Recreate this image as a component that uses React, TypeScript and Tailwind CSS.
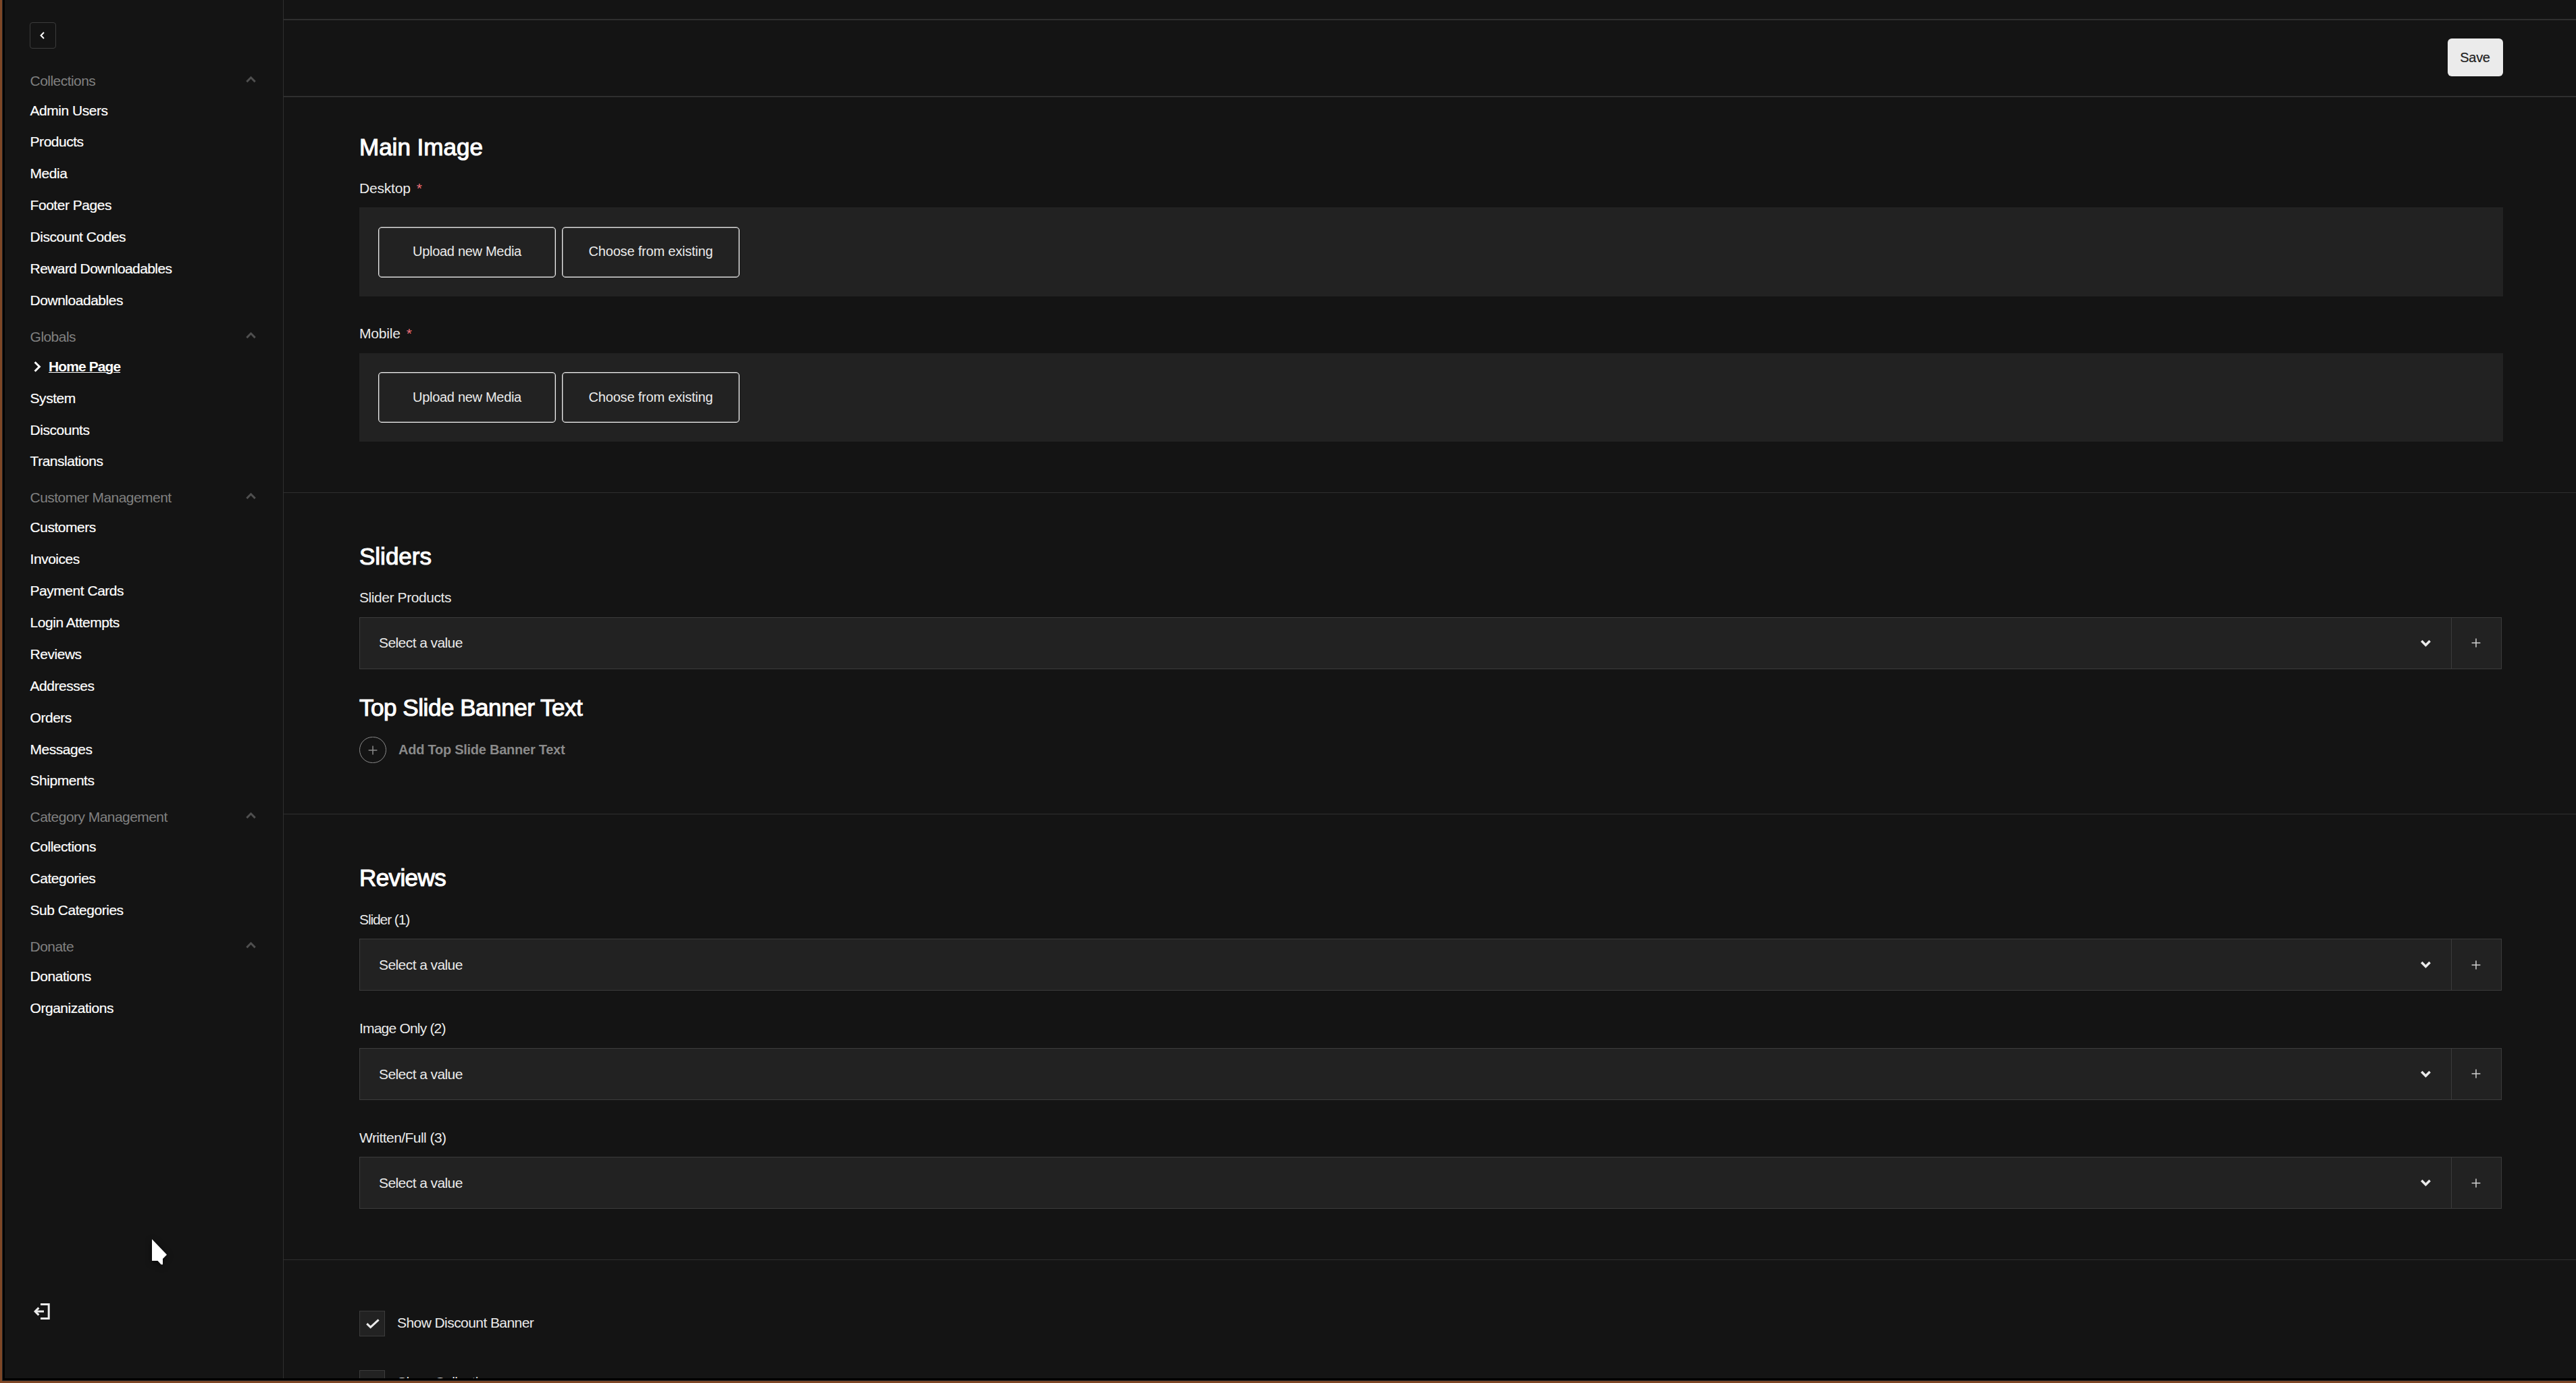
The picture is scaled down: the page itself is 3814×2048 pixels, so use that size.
import { useState } from "react";
import clsx from "clsx";

const navGroups = [
  {
    label: "Collections",
    items: ["Admin Users", "Products", "Media", "Footer Pages", "Discount Codes", "Reward Downloadables", "Downloadables"],
  },
  { label: "Globals", items: ["Home Page", "System", "Discounts", "Translations"] },
  {
    label: "Customer Management",
    items: ["Customers", "Invoices", "Payment Cards", "Login Attempts", "Reviews", "Addresses", "Orders", "Messages", "Shipments"],
  },
  { label: "Category Management", items: ["Collections", "Categories", "Sub Categories"] },
  { label: "Donate", items: ["Donations", "Organizations"] },
];

function Chevron({ className, width = 2.8 }: { className?: string; width?: number }) {
  return (
    <svg viewBox="0 0 15 11" fill="none" stroke="currentColor" strokeWidth={width} className={clsx("h-[11px] w-[15px] shrink-0", className)}>
      <path d="M1.3 1.9 7.5 8.2l6.2-6.3" />
    </svg>
  );
}

function Plus({ className }: { className?: string }) {
  return (
    <svg viewBox="0 0 14 14" fill="none" stroke="currentColor" strokeWidth="1.5" className={clsx("h-[14px] w-[14px]", className)}>
      <path d="M7 .6v12.8M.6 7h12.8" />
    </svg>
  );
}

function NavGroup({ label, items, active }: { label: string; items: string[]; active: string }) {
  const [open, setOpen] = useState(true);

  return (
    <div>
      <button
        onClick={() => setOpen(!open)}
        className="flex h-[51.125px] w-full items-start justify-between pt-[16.8px] text-[#808080]"
      >
        <span className="leading-7 tracking-[-0.55px]">{label}</span>
        <Chevron width={3} className={clsx("mt-[6px] text-[#4f4f4f]", open && "rotate-180")} />
      </button>
      {open &&
        items.map((item) => (
          <a
            key={item}
            href="#"
            className={clsx(
              "flex h-[46.875px] items-center text-white [-webkit-text-stroke:0.2px]",
              item.length > 16 ? "tracking-[-0.6px]" : "tracking-[-0.48px]"
            )}
          >
            {item === active ? (
              <>
                <svg viewBox="0 0 11 16" fill="none" stroke="currentColor" strokeWidth="3" className="ml-[5px] h-4 w-[11px]">
                  <path d="M1.6 1.2 8.4 8l-6.8 6.8" />
                </svg>
                <span className="ml-[11.5px] font-bold tracking-[-0.92px] underline decoration-1 underline-offset-1 [-webkit-text-stroke:0px]">
                  {item}
                </span>
              </>
            ) : (
              item
            )}
          </a>
        ))}
    </div>
  );
}

function Sidebar() {
  return (
    <aside className="flex w-[413px] shrink-0 flex-col border-r border-[#2f2f2f] pr-10 pl-[37px] pt-[33px]">
      <button
        aria-label="Collapse"
        className="mb-[16.8px] flex h-[39px] w-[39px] shrink-0 items-center justify-center rounded border border-[#3c3c3c] text-white"
      >
        <svg viewBox="0 0 7 11" fill="none" stroke="currentColor" strokeWidth="2" className="mr-[2px] mb-[1px] h-[11px] w-[7px]">
          <path d="M6 1 1.6 5.5 6 10" />
        </svg>
      </button>
      <nav className="pl-[0.6px]">
        {navGroups.map((g) => (
          <NavGroup key={g.label} label={g.label} items={g.items} active="Home Page" />
        ))}
      </nav>
      <button aria-label="Log out" className="mt-auto mb-[87px] ml-[6px] w-6 text-[#ebebeb]">
        <svg viewBox="0 0 24 24" fill="none" stroke="currentColor" strokeWidth="3" className="h-6 w-6">
          <path d="M10 1.5h12.2v21H10" />
          <path d="M15 12H2" />
          <path d="M7.4 6.6 2 12l5.4 5.4" />
        </svg>
      </button>
    </aside>
  );
}

function Section({ children, className }: { children: React.ReactNode; className?: string }) {
  return (
    <section className={clsx("border-b border-[#2f2f2f] pr-[108px] pb-[74.5px] pl-[112px]", className)}>{children}</section>
  );
}

function Heading({ children, className }: { children: string; className?: string }) {
  return (
    <h3 className={clsx("text-[35px] leading-10 text-white [-webkit-text-stroke:1.1px]", className)}>{children}</h3>
  );
}

function UploadField({ label }: { label: string }) {
  return (
    <div>
      <label className="flex leading-6 tracking-[-0.2px]">
        {label}
        <span className="ml-[9px] text-[21px] leading-[23px] text-[#f0717a]">*</span>
      </label>
      <div className="mt-[16.5px] flex h-[131.5px] items-start gap-[9px] bg-[#222] pt-[28.5px] pl-7 text-xl">
        <button className="h-[75px] w-[263px] rounded-[5px] border border-[#ebebeb] pb-[2px] tracking-[-0.3px] inset-shadow-[0_0_0_1px_#6b6b6b]">
          Upload new Media
        </button>
        <button className="h-[75px] w-[263px] rounded-[5px] border border-[#ebebeb] pb-[2px] tracking-[-0.2px] inset-shadow-[0_0_0_1px_#6b6b6b]">
          Choose from existing
        </button>
      </div>
    </div>
  );
}

function SelectField({ label, labelClass = "tracking-[-0.42px]" }: { label: string; labelClass?: string }) {
  return (
    <div>
      <label className={clsx("block leading-6", labelClass)}>{label}</label>
      <div className="mt-[16.5px] mr-[2px] flex h-[77px] border border-[#3c3c3c] bg-[#222]">
        <div className="flex flex-1 items-center justify-between pr-[30px] pl-7">
          <span className="tracking-[-0.58px]">Select a value</span>
          <Chevron width={3.5} />
        </div>
        <button aria-label="Add" className="flex w-[74px] items-center justify-center border-l border-[#3c3c3c] pr-[2px] text-[#d0d0d0]">
          <Plus />
        </button>
      </div>
    </div>
  );
}

function Checkbox({ label, defaultChecked = false }: { label: string; defaultChecked?: boolean }) {
  const [checked, setChecked] = useState(defaultChecked);

  return (
    <button onClick={() => setChecked(!checked)} className="flex h-[38px] items-center">
      <span className="flex h-[38px] w-[38px] items-center justify-center border border-[#3c3c3c] bg-[#222]">
        {checked && (
          <svg viewBox="0 0 20 15" fill="none" stroke="currentColor" strokeWidth="3" className="mt-[1px] ml-[1px] h-[15px] w-5">
            <path d="M1.2 7.2 6.6 12.4 18.6 1.4" />
          </svg>
        )}
      </span>
      <span className="ml-[18px] pb-[2px] tracking-[-0.57px]">{label}</span>
    </button>
  );
}

export default function App() {
  return (
    <div className="h-[2048px] w-[3814px] border-b-3 border-l-3 border-[#7f4726] bg-black font-['Liberation_Sans',sans-serif] text-[21px] text-[#ebebeb]">
      <div className="h-full border-b border-l border-[#2b2b2b] pb-[3px] pl-[3px]">
        <div className="flex h-full overflow-hidden bg-[#141414]">
          <Sidebar />
          <main className="min-w-0 flex-1">
            <header className="mt-7 flex h-[116px] items-center justify-end border-y-2 border-[#2f2f2f] pr-[108px] pb-[2px]">
              <button className="h-14 w-[82px] rounded-md bg-[#ebebeb] pr-[1px] text-xl tracking-[-0.3px] text-[#222] [-webkit-text-stroke:0.2px]">
                Save
              </button>
            </header>

            <Section className="pt-[53.5px]">
              <Heading className="mb-[29px]">Main Image</Heading>
              <div className="flex flex-col gap-[43.6px]">
                <UploadField label="Desktop" />
                <UploadField label="Mobile" />
              </div>
            </Section>

            <Section className="pt-[74.6px]">
              <Heading className="mb-[29px]">Sliders</Heading>
              <SelectField label="Slider Products" />
              <Heading className="mt-[37.5px] mb-[23px] tracking-[-0.45px]">Top Slide Banner Text</Heading>
              <button className="flex items-center text-xl font-bold text-[#8a8a8a]">
                <span className="flex h-[39px] w-10 items-center justify-center rounded-full border border-[#8a8a8a]">
                  <Plus />
                </span>
                <span className="ml-[18px] pb-[2px] tracking-[-0.25px]">Add Top Slide Banner Text</span>
              </button>
            </Section>

            <Section className="pt-[74.5px]">
              <Heading className="mb-[29.6px] tracking-[-0.6px]">Reviews</Heading>
              <div className="flex flex-col gap-11">
                <SelectField label="Slider (1)" labelClass="tracking-[-1.1px]" />
                <SelectField label="Image Only (2)" labelClass="tracking-[-0.8px]" />
                <SelectField label="Written/Full (3)" labelClass="tracking-[-0.55px]" />
              </div>
            </Section>

            <Section className="flex flex-col items-start gap-[50px] pt-[75px]">
              <Checkbox label="Show Discount Banner" defaultChecked />
              <Checkbox label="Show Collections" />
            </Section>
          </main>
        </div>
      </div>

      {/* mouse pointer */}
      <svg viewBox="0 0 24 40" fill="#fff" className="absolute top-[1834px] left-[224px] h-10 w-6 overflow-visible drop-shadow-[0_2px_5px_rgba(0,0,0,0.6)]">
        <path d="M1 1v32h8.5l5 5.5H17v-8.5l6-6z" />
      </svg>
    </div>
  );
}
